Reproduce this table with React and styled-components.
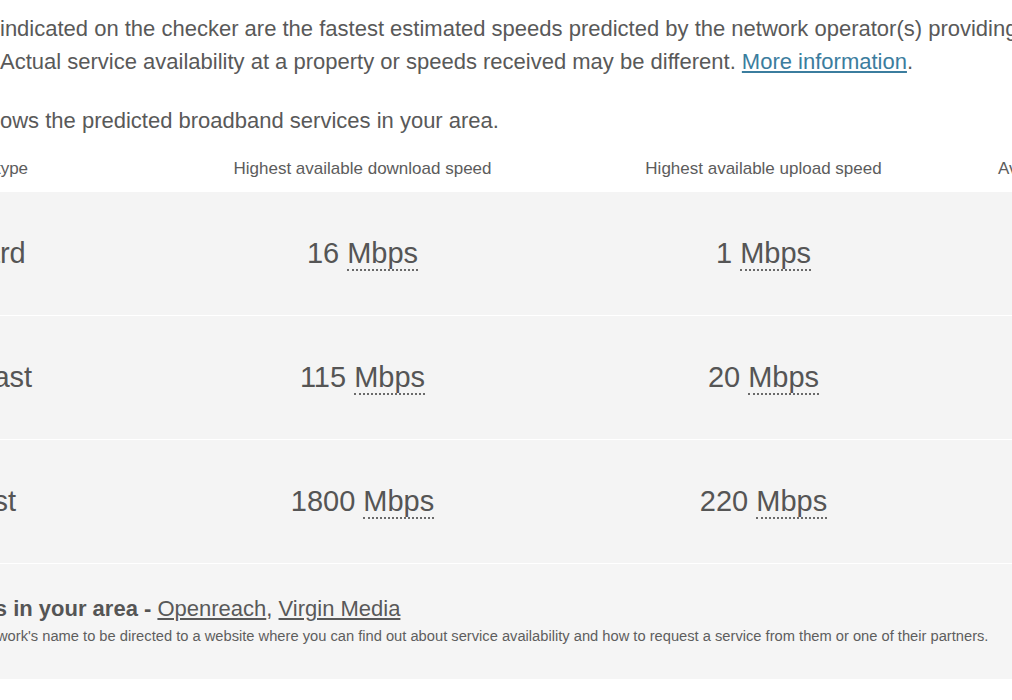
import styled, { createGlobalStyle } from "styled-components";

const GlobalStyle = createGlobalStyle`
  html, body {
    margin: 0;
    padding: 0;
    background: #ffffff;
    overflow: hidden;
  }
  body {
    font-family: "Liberation Sans", Arial, Helvetica, sans-serif;
    color: #595959;
  }
`

const Page = styled.div`
  width: 1012px;
  height: 700px;
  overflow: hidden;
  padding-top: 12px;
  box-sizing: border-box;
`

const Intro = styled.p`
  margin: 0 0 ${(p) => (p.$gap ? "26px" : "0")};
  font-size: 22px;
  line-height: 33px;
  white-space: nowrap;
`

const InfoLink = styled.a`
  color: #3b7d9e;
  text-decoration: underline;
`

const Content = styled.div`
  margin-left: -92px;
  width: 1320px;
`

const columns = `254px 401px 401px 148px`

const HeaderRow = styled.div`
  display: grid;
  grid-template-columns: ${columns};
  padding: 20px 0 11px;
  font-size: 17px;
  line-height: 1.4;
  color: #5c5c5c;
`

const HeadCell = styled.div`
  text-align: ${(p) => (p.$left ? "left" : "center")};
  white-space: nowrap;
`

const Row = styled.div`
  display: grid;
  grid-template-columns: ${columns};
  align-items: center;
  height: 124px;
  box-sizing: border-box;
  background: #f4f4f4;
  border-bottom: 1px solid #ffffff;
  font-size: 29px;
  line-height: 1.2;
  color: #555555;
`

const Cell = styled.div`
  text-align: ${(p) => (p.$left ? "left" : "center")};
  white-space: nowrap;
`

const Unit = styled.abbr`
  text-decoration: none;
  border-bottom: 2px dotted #6a6a6a;
  cursor: help;
`

const Tick = styled.svg`
  width: 22px;
  height: 22px;
  vertical-align: middle;
`

const Networks = styled.div`
  background: #f5f5f5;
  padding: 31px 0 32px;
`

const NetworksTitle = styled.div`
  font-size: 22px;
  line-height: 1.3;
  color: #555555;
  white-space: nowrap;

  strong {
    font-weight: bold;
  }
`

const NetworkLink = styled.a`
  color: #595959;
  text-decoration: underline;
`

const NetworksNote = styled.div`
  margin-top: 3px;
  font-size: 14.7px;
  line-height: 1.4;
  color: #5e5e5e;
  white-space: nowrap;
`

const services = [
	{type: "Standard", down: 16, up: 1},
	{type: "Superfast", down: 115, up: 20},
	{type: "Ultrafast", down: 1800, up: 220},
]

const Speed = ({value}) => (
	<>
		{value} <Unit title="Megabits per second">Mbps</Unit>
	</>
)

export default function App() {
	return (
		<Page>
			<GlobalStyle/>
			<Intro $gap>
				indicated on the checker are the fastest estimated speeds predicted by the network operator(s) providing services in your area.
				<br/>
				Actual service availability at a property or speeds received may be different. <InfoLink href="#">More information</InfoLink>.
			</Intro>
			<Intro>ows the predicted broadband services in your area.</Intro>

			<Content>
				<HeaderRow>
					<HeadCell $left>Broadband type</HeadCell>
					<HeadCell>Highest available download speed</HeadCell>
					<HeadCell>Highest available upload speed</HeadCell>
					<HeadCell>Availability</HeadCell>
				</HeaderRow>
				{services.map((s) => (
					<Row key={s.type}>
						<Cell $left>{s.type}</Cell>
						<Cell><Speed value={s.down}/></Cell>
						<Cell><Speed value={s.up}/></Cell>
						<Cell>
							<Tick viewBox="0 0 24 24" fill="none" stroke="#3c8d3c" strokeWidth="3">
								<path d="M4 12l5 5L20 6"/>
							</Tick>
						</Cell>
					</Row>
				))}
				<Networks>
					<NetworksTitle>
						<strong>Networks in your area - </strong>
						<NetworkLink href="#">Openreach</NetworkLink>, <NetworkLink href="#">Virgin Media</NetworkLink>
					</NetworksTitle>
					<NetworksNote>
						Click on a network's name to be directed to a website where you can find out about service availability and how to request a service from them or one of their partners.
					</NetworksNote>
				</Networks>
			</Content>
		</Page>
	)
}
